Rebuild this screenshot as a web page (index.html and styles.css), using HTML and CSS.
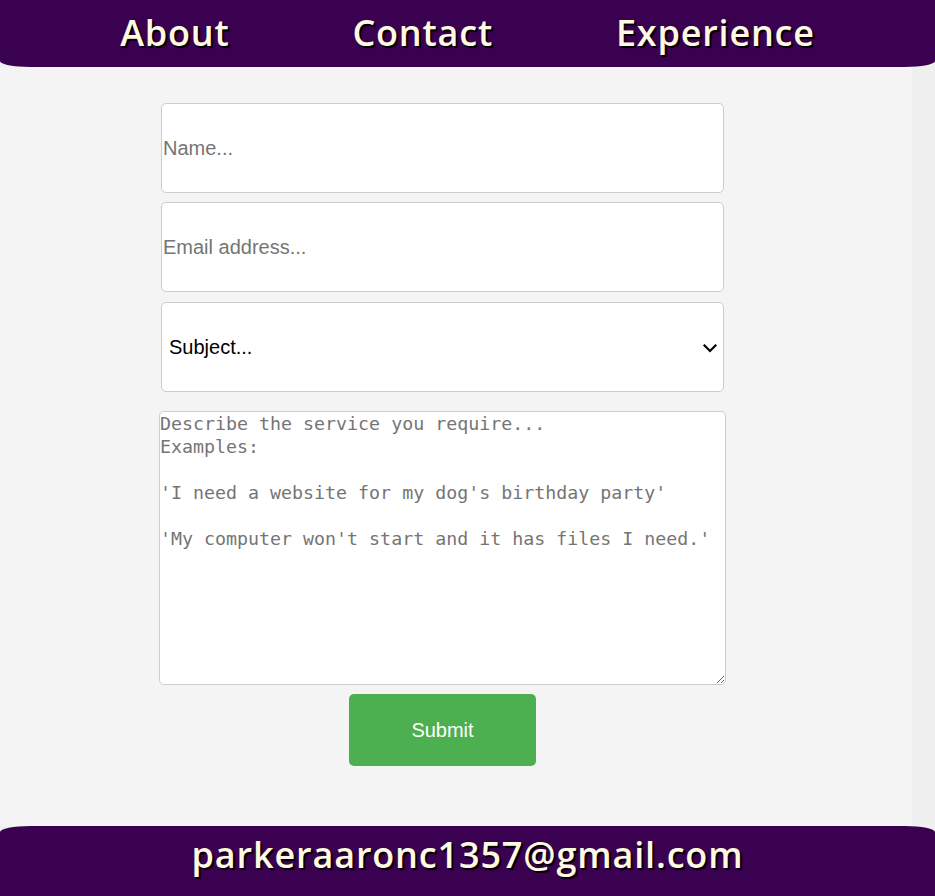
FILE: index.html
```html
<!DOCTYPE html>
<html lang="en">
<head>
<meta charset="utf-8">
<title>Contact</title>
<link rel="stylesheet" href="styles.css">
</head>
<body>
<header class="topbar">
  <nav class="nav">
    <a class="nav-link" href="#">About</a>
    <a class="nav-link" href="#">Contact</a>
    <a class="nav-link" href="#">Experience</a>
  </nav>
</header>
<main class="page">
  <form class="contact-form">
    <input class="field" type="text" placeholder="Name...">
    <input class="field field-email" type="email" placeholder="Email address...">
    <div class="select-wrap">
      <select class="field field-select">
        <option>Subject...</option>
      </select>
      <svg class="chevron" width="14" height="9" viewBox="0 0 14 9" aria-hidden="true">
        <path d="M1.5 1.5 L7 7 L12.5 1.5" fill="none" stroke="#000" stroke-width="2.2" stroke-linecap="square"/>
      </svg>
    </div>
    <textarea class="message" placeholder="Describe the service you require...
Examples:

'I need a website for my dog's birthday party'

'My computer won't start and it has files I need.'"></textarea>
    <button class="submit" type="button">Submit</button>
  </form>
</main>
<footer class="bottombar">
  <span class="footer-mail">parkeraaronc1357@gmail.com</span>
</footer>
</body>
</html>
```
FILE: styles.css
```css
html {
  background: #f0f0f0;
}
body {
  margin: 0;
  font-family: "Liberation Sans", Arial, sans-serif;
  background: #f0f0f0;
}
.topbar {
  background: #3a0151;
  height: 67px;
  border-radius: 0 0 30px 30px / 0 0 6px 6px;
  display: flex;
  align-items: center;
  justify-content: center;
}
.nav {
  display: flex;
  gap: 123px;
  margin-top: -3px;
}
.nav-link,
.footer-mail {
  font-family: "Open Sans", "DejaVu Sans", sans-serif;
  font-weight: 600;
  font-size: 36px;
  color: #fff9e3;
  text-decoration: none;
  text-shadow: 2px 2px 1px #000;
  letter-spacing: 0.8px;
}
.page {
  background: #f4f4f4;
  margin-right: 23px;
  padding: 36px 0 60px;
}
.contact-form {
  width: 567px;
  margin-left: 159px;
  display: flex;
  flex-direction: column;
}
.field {
  box-sizing: border-box;
  width: 563px;
  height: 90px;
  margin: 0 2px 9px;
  border: 1px solid #cccccc;
  border-radius: 5px;
  background: #ffffff;
  font-family: "Liberation Sans", Arial, sans-serif;
  font-size: 20px;
  padding: 0 1px;
  color: #000;
}
.field::placeholder {
  color: #757575;
}
.field-email {
  margin-bottom: 10px;
}
.select-wrap {
  position: relative;
  display: flex;
  margin-bottom: 19px;
}
.field-select {
  appearance: none;
  -webkit-appearance: none;
  padding: 0 7px;
  margin-bottom: 0;
}
.chevron {
  position: absolute;
  left: 544px;
  top: 42px;
  pointer-events: none;
}
.message {
  box-sizing: border-box;
  width: 567px;
  height: 274px;
  margin: 0 0 9px;
  border: 1px solid #cccccc;
  border-radius: 5px;
  background: #ffffff;
  padding: 0 1px 0 0;
  font-family: "DejaVu Sans Mono", "Liberation Mono", monospace;
  font-size: 18.3px;
  line-height: 23px;
}
.message::placeholder {
  color: #757575;
}
.submit {
  align-self: center;
  width: 187px;
  height: 72px;
  border: none;
  border-radius: 5px;
  background: #4caf50;
  color: #ffffff;
  font-family: "Liberation Sans", Arial, sans-serif;
  font-size: 20px;
}
.bottombar {
  background: #3a0151;
  height: 70px;
  border-radius: 30px 30px 0 0 / 6px 6px 0 0;
  display: flex;
  align-items: center;
  justify-content: center;
}
.footer-mail {
  margin-top: -14px;
  letter-spacing: 0.85px;
}
```
